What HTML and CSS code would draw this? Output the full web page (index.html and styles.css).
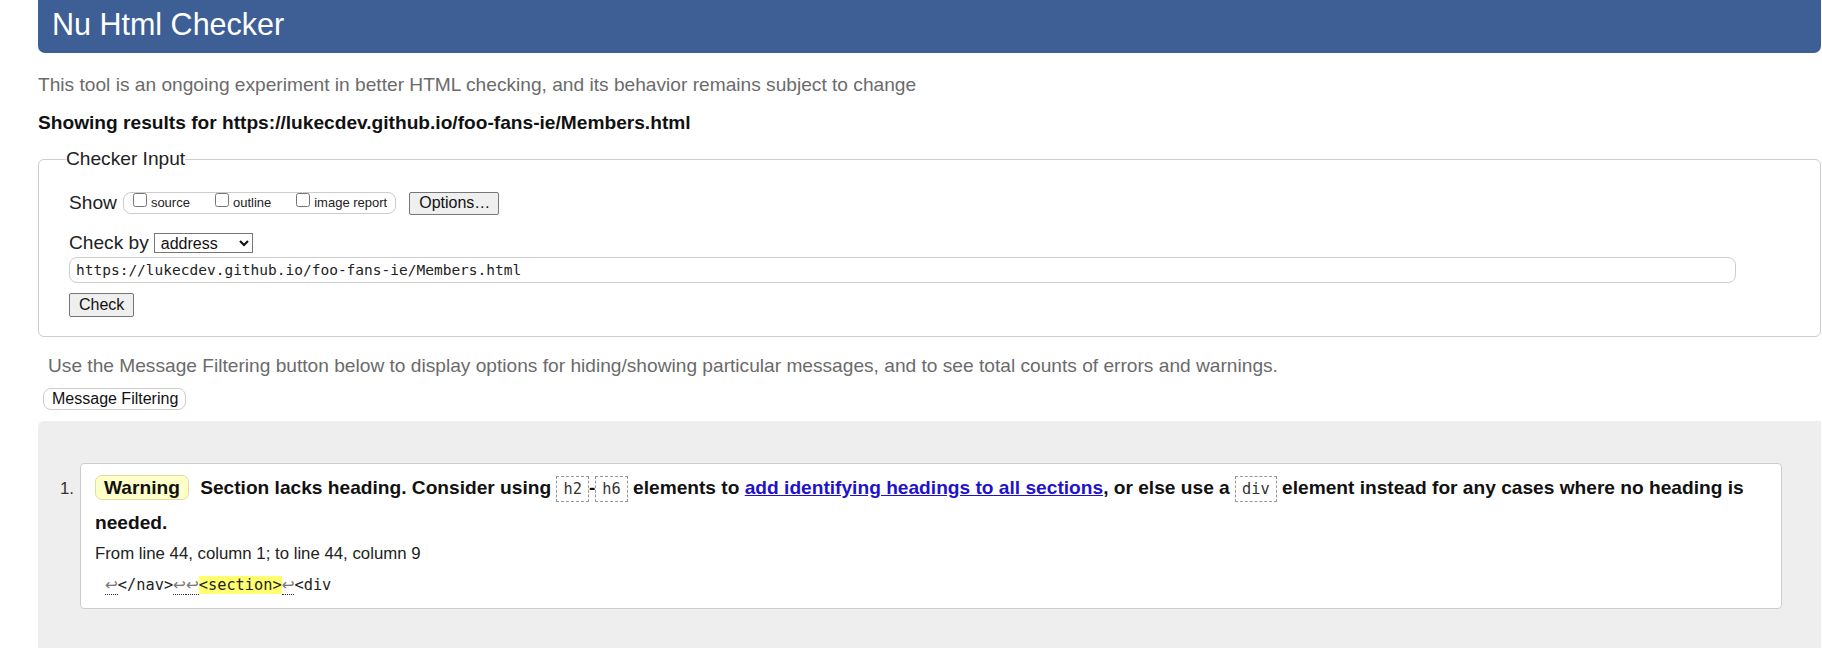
FILE: index.html
```html
<!DOCTYPE html>
<html lang="en">
<head>
<meta charset="utf-8">
<title>Nu Html Checker</title>
<link rel="stylesheet" href="styles.css">
</head>
<body>
<h1 class="title">Nu Html Checker</h1>
<p class="intro">This tool is an ongoing experiment in better HTML checking, and its behavior remains subject to change</p>
<p class="results">Showing results for https://lukecdev.github.io/foo-fans-ie/Members.html</p>
<fieldset class="checker">
  <legend class="legend">Checker Input</legend>
  <div class="row show-row">
    <span class="row-label">Show</span>
    <span class="show-group"><label class="opt"><input type="checkbox" class="cb">source</label><label class="opt"><input type="checkbox" class="cb">outline</label><label class="opt last"><input type="checkbox" class="cb">image report</label></span>
    <button class="btn options-btn">Options…</button>
  </div>
  <div class="row by-row">
    <span class="row-label">Check by</span>
    <select class="select"><option>address</option></select>
  </div>
  <input class="url" type="text" value="https://lukecdev.github.io/foo-fans-ie/Members.html">
  <button class="btn check-btn">Check</button>
</fieldset>
<p class="filter-note">Use the Message Filtering button below to display options for hiding/showing particular messages, and to see total counts of errors and warnings.</p>
<button class="filter-btn">Message Filtering</button>
<div class="results-area">
  <ol class="messages">
    <li class="message-item">
      <span class="num">1.</span>
      <div class="panel">
        <p class="msg"><span class="badge">Warning</span> Section lacks heading. Consider using <code class="c">h2</code>-<code class="c">h6</code> elements to <a href="#" class="link">add identifying headings to all sections</a>, or else use a <code class="c">div</code> element instead for any cases where no heading is needed.</p>
        <p class="loc">From line 44, column 1; to line 44, column 9</p>
        <p class="extract"><span class="lf">↩</span>&lt;/nav&gt;<span class="lf">↩</span><span class="lf">↩</span><mark class="hl">&lt;section&gt;</mark><span class="lf">↩</span>&lt;div</p>
      </div>
    </li>
  </ol>
</div>
</body>
</html>
```
FILE: styles.css
```css
html, body {
  margin: 0;
  background: #fff;
}
body {
  padding: 0 1px 0 38px;
  font-family: "Liberation Sans", Arial, sans-serif;
  font-size: 19.15px;
  line-height: 1.15;
  color: #222;
}
.title {
  margin: 0;
  padding: 0 0 4px 14px;
  line-height: 49px;
  font-size: 30.5px;
  font-weight: normal;
  color: #fff;
  background: #3e5f96;
  border-radius: 0 0 7px 7px;
}
.intro {
  margin: 21px 0 0;
  color: #6b6b6b;
}
.results {
  margin: 16px 0 0;
  font-weight: bold;
  color: #111;
}
.checker {
  margin: 14.2px 0 0;
  min-width: 0;
  border: 1px solid #ccc;
  border-radius: 6px;
  padding: 21.4px 30px 19px 30px;
}
.legend {
  padding: 0;
  margin-left: -3px;
  font-size: 19.15px;
  color: #222;
}
.row {
  display: flex;
  align-items: center;
}
.show-row {
  height: 23px;
}
.by-row {
  height: 20px;
  margin-top: 18px;
}
.row-label {
  color: #222;
}
.show-group {
  display: inline-block;
  box-sizing: border-box;
  height: 22px;
  margin-left: 6px;
  padding: 0 8px 0 9px;
  border: 1px solid #ccc;
  border-radius: 8px;
  font-size: 13px;
  line-height: 20px;
  white-space: nowrap;
  color: #222;
}
.opt {
  margin-right: 25px;
}
.opt.last {
  margin-right: 0;
}
.cb {
  width: 14px;
  height: 14px;
  margin: 0 4px 0 0;
  vertical-align: baseline;
}
.btn {
  box-sizing: border-box;
  font-family: "Liberation Sans", Arial, sans-serif;
  font-size: 16px;
  color: #111;
  background: #efefef;
  border: 1px solid #767676;
  border-radius: 2px;
}
.options-btn {
  height: 23px;
  margin-left: 13px;
  padding: 0 8px 0 9px;
}
.select {
  box-sizing: border-box;
  width: 99px;
  height: 20px;
  margin-left: 5px;
  padding: 0 0 0 2px;
  font-family: "Liberation Sans", Arial, sans-serif;
  font-size: 16px;
  color: #111;
  background: #fff;
  border: 1px solid #767676;
  border-radius: 0;
}
.url {
  display: block;
  box-sizing: border-box;
  width: 1667px;
  height: 26px;
  margin-top: 4px;
  padding: 0 6px;
  border: 1px solid #ccc;
  border-radius: 8px;
  font-family: "DejaVu Sans Mono", "Liberation Mono", monospace;
  font-size: 14.5px;
  color: #222;
  background: #fff;
}
.check-btn {
  display: block;
  height: 24px;
  margin-top: 10px;
  padding: 0 9px;
}
.filter-note {
  margin: 18.5px 0 0;
  padding-left: 10px;
  color: #6b6b6b;
}
.filter-btn {
  display: block;
  box-sizing: border-box;
  height: 22px;
  margin: 10.5px 0 0 5px;
  padding: 0 7px 0 8px;
  font-family: "Liberation Sans", Arial, sans-serif;
  font-size: 16px;
  color: #111;
  background: #fff;
  border: 1px solid #ccc;
  border-radius: 8px;
}
.results-area {
  margin-top: 11px;
  padding: 42px 39px 39px 0;
  background: #eee;
  border-radius: 6px 0 0 0;
}
.messages {
  list-style: none;
  margin: 0;
  padding: 0;
}
.message-item {
  display: flex;
  align-items: baseline;
}
.num {
  flex: 0 0 42px;
  box-sizing: border-box;
  padding-right: 6px;
  text-align: right;
  font-size: 16.8px;
  color: #333;
}
.panel {
  flex: 1 1 auto;
  min-width: 0;
  background: #fff;
  border: 1px solid #ccc;
  border-radius: 4px;
  padding: 7.3px 11px 13px 14px;
}
.msg {
  margin: 0;
  line-height: 34px;
  font-weight: bold;
  color: #111;
}
.badge {
  padding: 1px 8px;
  margin-right: 6px;
  background: #ffffc8;
  border: 1px solid #dedea8;
  border-radius: 7px;
  color: #111;
}
.c {
  padding: 3px 6px;
  border: 1px dashed #999;
  font-family: "DejaVu Sans Mono", "Liberation Mono", monospace;
  font-size: 15.3px;
  font-weight: normal;
  color: #333;
}
.link {
  color: #1f12cc;
  text-decoration: underline;
}
.loc {
  margin: 4px 0 0;
  font-size: 16.8px;
  color: #222;
}
.extract {
  margin: 14px 0 0;
  padding-left: 10px;
  font-family: "DejaVu Sans Mono", "Liberation Mono", monospace;
  font-size: 15.3px;
  white-space: pre;
  color: #222;
}
.lf {
  font-family: "DejaVu Sans", sans-serif;
  color: #777;
  border-bottom: 1px dotted #333;
}
.hl {
  background: #ffff70;
  color: #222;
}
```
